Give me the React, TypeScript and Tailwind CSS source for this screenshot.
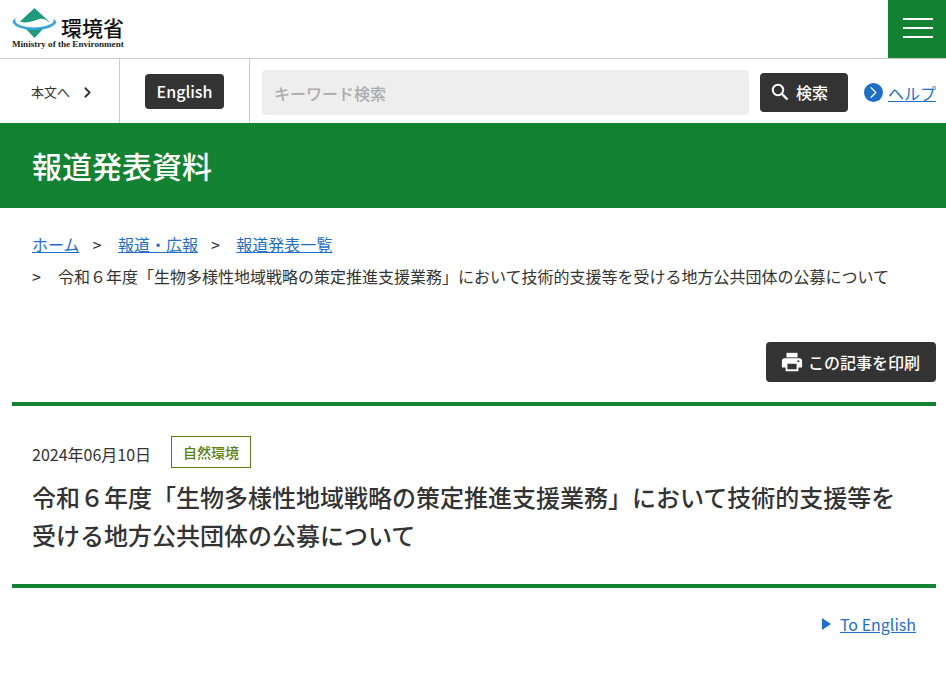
import { ChevronRight } from 'lucide-react';

const font = 'font-["Noto_Sans_CJK_JP","Noto_Sans",sans-serif]';

function Logo() {
  return (
    <a href="#" className="block h-[40px] w-[113px] pt-[8px]">
      <div className="flex h-[31px] items-start">
        <svg width="46" height="31" viewBox="0 0 46 31" className="shrink-0">
          <path d="M22.5 0 L37.5 14 L22.5 30 L7.5 14 Z" fill="#1f9a7c" />
          <path d="M8 13.5 C15 16 21 13 27 11 C31 10 34 11.5 37 14 L39 17 C30 22 14 22 6 17 Z" fill="#ffffff" />
          <path d="M4 10 C-1.5 13 0 16 6 19 C14 23 31 23 39 19 C45 16 46 13 41 11 C43 14 40 16 35 17.5 C28 20 16 20 9 17.5 C4 16 2 13 4 10 Z" fill="#3aa3dc" />
        </svg>
        <span className={`${font} ml-[3px] mt-[9px] text-[21px] leading-[21px] font-medium whitespace-nowrap text-[#111]`}>環境省</span>
      </div>
      <div className='mt-[1px] font-["Liberation_Serif",serif] text-[9.1px] leading-[9px] font-bold whitespace-nowrap text-[#222]'>
        Ministry of the Environment
      </div>
    </a>
  );
}

function Header() {
  return (
    <header>
      <div className="flex h-[59px] items-start justify-between border-b border-[#cccccc] pl-[12px]">
        <Logo />
        <button type="button" className="flex h-[58px] w-[58px] flex-col items-center justify-center gap-[7px] bg-[#148233] pb-[2px] pl-[2px]">
          <span className="block h-[2px] w-[30px] bg-white" />
          <span className="block h-[2px] w-[30px] bg-white" />
          <span className="block h-[2px] w-[30px] bg-white" />
        </button>
      </div>
      <div className="flex h-[64px] items-stretch">
        <a href="#" className="flex w-[120px] items-center border-r border-[#cccccc] pt-[2px] pl-[31px] text-[13px] text-[#333]">
          本文へ
          <ChevronRight size={17} strokeWidth={2.5} className="ml-[9px] text-[#333]" />
        </a>
        <div className="flex w-[130px] items-start border-r border-[#cccccc] pt-[15px] pl-[25px]">
          <a href="#" className="flex h-[35px] w-[79px] items-center justify-center rounded-[4px] bg-[#333333] pb-[2px] text-[16px] font-medium text-white">
            English
          </a>
        </div>
        <div className="ml-[12px] mt-[11px] flex h-[45px] w-[487px] items-center rounded-[4px] bg-[#eeeeee] pl-[12px] text-[16px] font-medium text-[#aaaaaa]">
          キーワード検索
        </div>
        <button type="button" className="ml-[11px] mt-[14px] flex h-[39px] w-[88px] items-center rounded-[4px] bg-[#333333] pb-[1px] pl-[11px] text-[16px] font-medium text-white">
          <svg width="18" height="18" viewBox="0 0 18 18" fill="none" stroke="#ffffff" strokeWidth="2">
            <circle cx="7" cy="7" r="5.2" />
            <path d="M11 11 L16.5 16.5" strokeWidth="2.4" />
          </svg>
          <span className="ml-[7px]">検索</span>
        </button>
        <a href="#" className="ml-[16px] mt-[23px] flex h-[30px] items-start">
          <span className="mt-[1px] flex h-[19px] w-[19px] items-center justify-center rounded-full bg-[#1f6fc6] text-white">
            <ChevronRight size={19} strokeWidth={1.5} />
          </span>
          <span className="ml-[5px] text-[16px] leading-[22px] text-[#1f6fc6] underline">ヘルプ</span>
        </a>
      </div>
    </header>
  );
}

function Breadcrumb() {
  const sep = <span className="mr-[16.5px] ml-[13px] text-[#333]">&gt;</span>;
  return (
    <nav className="px-[32px] pt-[20px] text-[16px] leading-[32px] text-[#333]">
      <div className="flex">
        <a href="#" className="text-[#1f6fc6] underline">ホーム</a>
        {sep}
        <a href="#" className="text-[#1f6fc6] underline">報道・広報</a>
        {sep}
        <a href="#" className="text-[#1f6fc6] underline">報道発表一覧</a>
      </div>
      <div className="flex whitespace-nowrap">
        <span className="mr-[17px]">&gt;</span>
        <span>令和６年度「生物多様性地域戦略の策定推進支援業務」において技術的支援等を受ける地方公共団体の公募について</span>
      </div>
    </nav>
  );
}

function PrintIcon() {
  return (
    <svg width="22" height="22" viewBox="0 0 24 24" fill="#ffffff" className="-ml-[1px]">
      <path d="M6 2h12v5H6z" />
      <path fillRule="evenodd" d="M4 8h16a3 3 0 0 1 3 3v7h-4v4H5v-4H1v-7a3 3 0 0 1 3-3Zm3 6v6h10v-6Zm12-4a1.2 1.2 0 1 0 0 2.4A1.2 1.2 0 0 0 19 10Z" />
    </svg>
  );
}

export default function App() {
  return (
    <div className={`${font} min-h-[695px] bg-white text-[#333]`}>
      <Header />
      <div className="flex h-[85px] items-center bg-[#148233] px-[32px] text-[30px] font-medium text-white">報道発表資料</div>
      <Breadcrumb />
      <div className="mt-[50px] flex justify-end pr-[10px]">
        <button type="button" className="flex h-[40px] w-[170px] items-center rounded-[4px] bg-[#333333] pl-[16px] text-[16px] font-medium text-white">
          <PrintIcon />
          <span className="ml-[5px]">この記事を印刷</span>
        </button>
      </div>
      <div className="mx-[10px] ml-[12px] mt-[20px] border-y-[4px] border-[#148233] px-[20px] pt-[30px] pb-[30px]">
        <div className="flex items-center">
          <span className="pt-[4px] text-[16px]">2024年06月10日</span>
          <span className="ml-[20px] flex h-[32px] w-[80px] items-center justify-center border border-[#5a8014] text-[14px] font-medium text-[#5a8014]">自然環境</span>
        </div>
        <h1 className="mt-[10px] text-[24px] leading-[38px] font-medium text-[#333]">
          令和６年度「生物多様性地域戦略の策定推進支援業務」において技術的支援等を受ける地方公共団体の公募について
        </h1>
      </div>
      <div className="mt-[24px] flex items-center justify-end pr-[30px] text-[16px]">
        <span className="mr-[9px] h-0 w-0 border-y-[6px] border-l-[9px] border-y-transparent border-l-[#1f6fc6]" />
        <a href="#" className="text-[#1f6fc6] underline">To English</a>
      </div>
    </div>
  );
}
